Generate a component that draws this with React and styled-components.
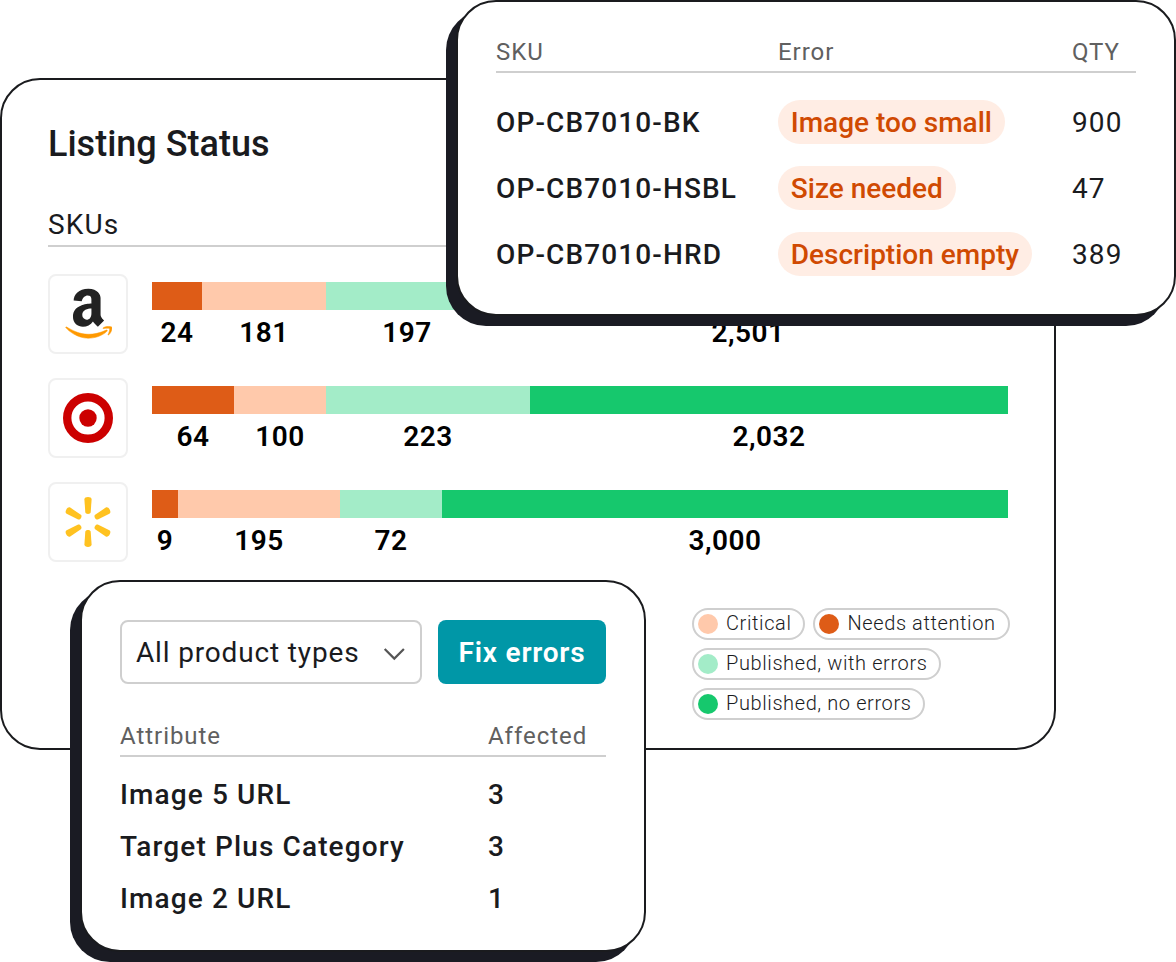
import React from 'react';
import styled, { createGlobalStyle, ThemeProvider } from 'styled-components';

const theme = {
  font: 'Roboto, "Liberation Sans", sans-serif',
  tracking: '0.04em',
  ink: '#1a1b1e',
  muted: '#606060',
  line: '#cfcfcf',
  shadow: '#1a1b23',
  teal: '#0097a7',
  status: {
    critical: '#ffc9ab',
    attention: '#de5c17',
    warnings: '#a3ecc8',
    clean: '#16c86d',
  },
};

const GlobalStyle = createGlobalStyle`
  * {
    box-sizing: border-box;
  }
  body {
    margin: 0;
    background: #ffffff;
  }
`;

const Stage = styled.main`
  position: relative;
  width: 1176px;
  height: 962px;
  padding-top: 78px;
  overflow: hidden;
  color: ${(props) => props.theme.ink};
  font-family: ${(props) => props.theme.font};
`;

const Card = styled.section`
  background: #ffffff;
  border: 2px solid ${(props) => props.theme.ink};
  border-radius: 40px;
`;

const StatusCard = styled(Card)`
  display: flex;
  flex-direction: column;
  width: 1056px;
  height: 672px;
  padding: 44px 46px 28px;
`;

const FloatingCard = styled(Card)`
  position: absolute;
  box-shadow: -10px 10px 0 ${(props) => props.theme.shadow};
`;

const ErrorsCard = styled(FloatingCard)`
  top: 0;
  left: 456px;
  width: 720px;
  height: 316px;
  padding: 32px 38px;
`;

const AttributesCard = styled(FloatingCard)`
  top: 580px;
  left: 80px;
  width: 566px;
  height: 372px;
  padding: 38px;
`;

const Title = styled.h1`
  margin: 0;
  font-size: 36px;
  font-weight: 500;
  line-height: 40px;
`;

const Subtitle = styled.h2`
  margin: 43px 0 27px;
  padding-bottom: 2px;
  border-bottom: 2px solid ${(props) => props.theme.line};
  font-size: 28px;
  font-weight: 400;
  line-height: 36px;
  letter-spacing: ${(props) => props.theme.tracking};
`;

const Channels = styled.div`
  display: flex;
  flex-direction: column;
  gap: 24px;
`;

const Channel = styled.div`
  display: flex;
  gap: 24px;
  height: 80px;
`;

const Tile = styled.div`
  display: flex;
  flex: none;
  align-items: center;
  justify-content: center;
  width: 80px;
  height: 80px;
  border: 2px solid #f0f0f0;
  border-radius: 8px;
`;

const Segments = styled.div`
  display: flex;
  flex: 1;
  padding-top: 8px;
`;

const Segment = styled.div`
  color: #000000;
  font-size: 28px;
  font-weight: 600;
  line-height: 32px;
  letter-spacing: 0.016em;
  text-align: center;
  &::before {
    content: '';
    display: block;
    height: 28px;
    margin-bottom: 7px;
    background: ${(props) => props.theme.status[props.$status]};
  }
`;

const Legend = styled.div`
  display: flex;
  flex-wrap: wrap;
  gap: 8px;
  width: 320px;
  margin: auto -4px 0 auto;
`;

const LegendItem = styled.span`
  display: flex;
  align-items: center;
  gap: 8px;
  height: 32px;
  padding: 0 12px 0 4px;
  border: 2px solid ${(props) => props.theme.line};
  border-radius: 16px;
  font-size: 20px;
  font-weight: 300;
  line-height: 26px;
  letter-spacing: 0.03em;
  white-space: nowrap;
  &::before {
    content: '';
    width: 20px;
    height: 20px;
    border-radius: 50%;
    background: ${(props) => props.theme.status[props.$status]};
  }
`;

const LegendLabel = styled.span`
  padding-bottom: 2px;
`;

const TableHead = styled.div`
  display: grid;
  grid-template-columns: ${(props) => props.$columns};
  padding-bottom: 1px;
  border-bottom: 2px solid ${(props) => props.theme.line};
  color: ${(props) => props.theme.muted};
  font-size: 24px;
  line-height: 36px;
  letter-spacing: ${(props) => props.theme.tracking};
`;

const TableRow = styled.div`
  display: grid;
  grid-template-columns: ${(props) => props.$columns};
  align-items: center;
  height: ${(props) => props.$height}px;
  font-size: 28px;
  letter-spacing: ${(props) => props.theme.tracking};
  white-space: nowrap;
`;

const TableBody = styled.div`
  padding-top: ${(props) => props.$offset}px;
`;

const Strong = styled.span`
  font-weight: 500;
`;

const ErrorTag = styled.span`
  justify-self: start;
  height: 44px;
  padding: 1px 12.8px 0;
  border-radius: 22px;
  background: #ffede4;
  color: #d04a02;
  font-weight: 500;
  line-height: 44px;
  letter-spacing: 0;
`;

const Toolbar = styled.div`
  display: flex;
  gap: 16px;
  margin-bottom: 34px;
`;

const Select = styled.button`
  display: flex;
  align-items: center;
  justify-content: space-between;
  width: 302px;
  height: 64px;
  padding: 0 14px;
  border: 2px solid ${(props) => props.theme.line};
  border-radius: 8px;
  background: #ffffff;
  color: inherit;
  font: 400 28px ${(props) => props.theme.font};
  letter-spacing: 0.03em;
`;

const PrimaryButton = styled.button`
  width: 168px;
  height: 64px;
  padding: 0;
  border: 0;
  border-radius: 8px;
  background: ${(props) => props.theme.teal};
  color: #ffffff;
  font: 600 28px ${(props) => props.theme.font};
  letter-spacing: 0.028em;
`;

const AmazonLogo = () => (
  <svg width="48" height="52" viewBox="0 0 48 52" aria-label="Amazon">
    <path
      fill="#222222"
      transform="translate(-0.6 -2.9) scale(0.109 0.1124)"
      d="M257.2 162.7c-48.7 1.8-169.5 15.5-169.5 117.5 0 109.5 138.3 114 183.5 43.2 6.5 10.2 35.4 37.5 45.3 46.8l56.8-56S341 288.9 341 261.4V114.3C341 89 316.5 32 228.7 32 140.7 32 94 87 94 136.3l73.5 6.8c16.3-49.5 54.2-49.5 54.2-49.5 40.7-.1 35.5 29.8 35.5 69.1zm0 86.8c0 80-84.2 68-84.2 17.2 0-47.2 50.5-56.7 84.2-57.8v40.6z"
    />
    <path
      fill="#ff9900"
      stroke="#ff9900"
      strokeWidth="5"
      transform="translate(1 1) scale(0.1065 0.1025)"
      d="M393.2 413c-7.7 10-70 67-174.5 67S34.2 408.5 9.7 379c-6.8-7.7 1-11.3 5.5-8.3C88.5 415.2 203 488.5 387.7 401c7.5-3.7 13.3 2 5.5 12zm39.8 2.2c-6.5 15.8-16 26.8-21.2 31-5.5 4.5-9.5 2.7-6.5-3.8s19.3-46.5 12.7-55c-6.5-8.3-37-4.3-48-3.2-10.8 1-13 2-14-.3-2.3-5.7 21.7-15.5 37.5-17.5 15.7-1.8 41-.8 46 5.7 3.7 5.1 0 27.1-6.5 43.1z"
    />
  </svg>
);

const TargetLogo = () => (
  <svg width="50" height="50" viewBox="0 0 50 50" aria-label="Target">
    <circle cx="25" cy="25" r="20.8" fill="none" stroke="#cc0000" strokeWidth="8.4" />
    <circle cx="25" cy="25" r="8.7" fill="#cc0000" />
  </svg>
);

const WalmartLogo = () => (
  <svg width="50" height="50" viewBox="-25 -25 50 50" fill="#ffc220" aria-label="Walmart">
    {[0, 60, 120, 180, 240, 300].map((angle) => (
      <path
        key={angle}
        transform={`rotate(${angle})`}
        d="M-3.6-22.6C-3.6-24.2-2-25 0-25S3.6-24.2 3.6-22.6L2.7-9.8C2.6-8.7 1.4-8.1 0-8.1S-2.6-8.7-2.7-9.8Z"
      />
    ))}
  </svg>
);

const Chevron = () => (
  <svg width="24" height="24" viewBox="0 0 24 24" fill="none" stroke="#555555" strokeWidth="2.2">
    <path d="M2.7 9l9.6 9.6L21.9 9" />
  </svg>
);

// each segment: [status, label, width in px]
const channels = [
  {
    name: 'amazon',
    Logo: AmazonLogo,
    segments: [
      ['attention', '24', 50],
      ['critical', '181', 124],
      ['warnings', '197', 162],
      ['clean', '2,501', 520],
    ],
  },
  {
    name: 'target',
    Logo: TargetLogo,
    segments: [
      ['attention', '64', 82],
      ['critical', '100', 92],
      ['warnings', '223', 204],
      ['clean', '2,032', 478],
    ],
  },
  {
    name: 'walmart',
    Logo: WalmartLogo,
    segments: [
      ['attention', '9', 26],
      ['critical', '195', 162],
      ['warnings', '72', 102],
      ['clean', '3,000', 566],
    ],
  },
];

const legend = [
  ['critical', 'Critical'],
  ['attention', 'Needs attention'],
  ['warnings', 'Published, with errors'],
  ['clean', 'Published, no errors'],
];

const errors = [
  { sku: 'OP-CB7010-BK', error: 'Image too small', qty: 900 },
  { sku: 'OP-CB7010-HSBL', error: 'Size needed', qty: 47 },
  { sku: 'OP-CB7010-HRD', error: 'Description empty', qty: 389 },
];

const attributes = [
  { name: 'Image 5 URL', affected: 3 },
  { name: 'Target Plus Category', affected: 3 },
  { name: 'Image 2 URL', affected: 1 },
];

const errorColumns = '282px 294px 1fr';
const attributeColumns = '368px 1fr';

const ListingStatus = () => (
  <StatusCard>
    <Title>Listing Status</Title>
    <Subtitle>SKUs</Subtitle>
    <Channels>
      {channels.map(({ name, Logo, segments }) => (
        <Channel key={name}>
          <Tile><Logo /></Tile>
          <Segments>
            {segments.map(([status, label, width]) => (
              <Segment key={status} $status={status} style={{ width }}>{label}</Segment>
            ))}
          </Segments>
        </Channel>
      ))}
    </Channels>
    <Legend>
      {legend.map(([status, label]) => (
        <LegendItem key={status} $status={status}>
          <LegendLabel>{label}</LegendLabel>
        </LegendItem>
      ))}
    </Legend>
  </StatusCard>
);

const SkuErrors = () => (
  <ErrorsCard>
    <TableHead $columns={errorColumns}>
      <span>SKU</span>
      <span>Error</span>
      <span>QTY</span>
    </TableHead>
    <TableBody $offset={16}>
      {errors.map(({ sku, error, qty }) => (
        <TableRow key={sku} $columns={errorColumns} $height={66}>
          <Strong>{sku}</Strong>
          <ErrorTag>{error}</ErrorTag>
          <span>{qty}</span>
        </TableRow>
      ))}
    </TableBody>
  </ErrorsCard>
);

const AttributeErrors = () => (
  <AttributesCard>
    <Toolbar>
      <Select type="button">All product types <Chevron /></Select>
      <PrimaryButton type="button">Fix errors</PrimaryButton>
    </Toolbar>
    <TableHead $columns={attributeColumns}>
      <span>Attribute</span>
      <span>Affected</span>
    </TableHead>
    <TableBody $offset={11}>
      {attributes.map(({ name, affected }) => (
        <TableRow key={name} $columns={attributeColumns} $height={52}>
          <Strong>{name}</Strong>
          <Strong>{affected}</Strong>
        </TableRow>
      ))}
    </TableBody>
  </AttributesCard>
);

const App = () => (
  <ThemeProvider theme={theme}>
    <GlobalStyle />
    <Stage>
      <ListingStatus />
      <SkuErrors />
      <AttributeErrors />
    </Stage>
  </ThemeProvider>
);

export default App;
